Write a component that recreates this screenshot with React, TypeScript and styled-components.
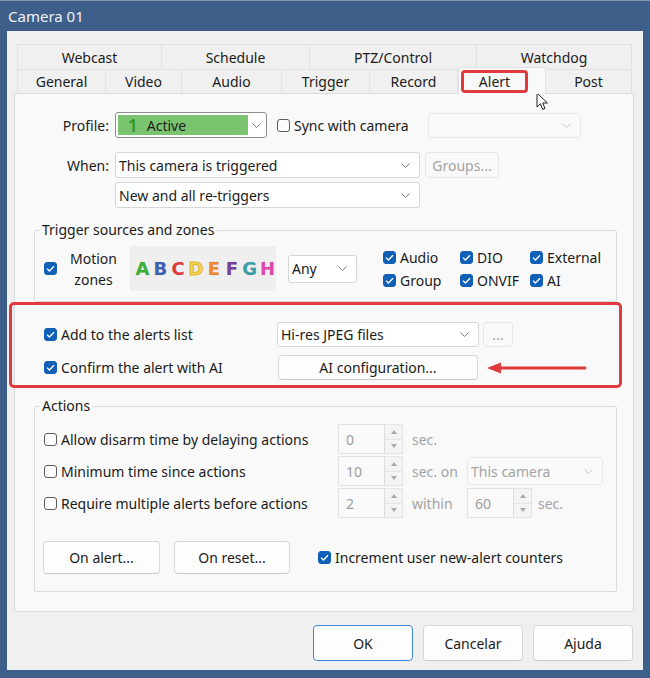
import styled, { createGlobalStyle, css } from "styled-components"

const GlobalStyle = createGlobalStyle`
    html, body {
        margin: 0;
        padding: 0;
        background: #3e5f8a;
    }
    body {
        font-family: "Noto Sans", "Open Sans", sans-serif;
        font-size: 14px;
        color: #1b1b1b;
    }
    * {
        box-sizing: border-box;
    }
`

const topTabs = [
    { label: "Webcast", width: 145 },
    { label: "Schedule", width: 148 },
    { label: "PTZ/Control", width: 167 },
    { label: "Watchdog", width: 155 }
]

const bottomTabs = [
    { label: "General", width: 89 },
    { label: "Video", width: 76 },
    { label: "Audio", width: 100 },
    { label: "Trigger", width: 88 },
    { label: "Record", width: 88 },
    { label: "Alert", width: 88, selected: true },
    { label: "Post", width: 86 }
]

const zones = [
    { letter: "A", color: "#3bb23a" },
    { letter: "B", color: "#3e60b5" },
    { letter: "C", color: "#e23b3b" },
    { letter: "D", color: "#f3d35a" },
    { letter: "E", color: "#ee8a2c" },
    { letter: "F", color: "#7a3e9d" },
    { letter: "G", color: "#3a9fa9" },
    { letter: "H", color: "#e246ac" }
]

const sources = [
    { label: "Audio" },
    { label: "DIO" },
    { label: "External" },
    { label: "Group" },
    { label: "ONVIF" },
    { label: "AI" }
]

const Chevron = ({ light }: { light?: boolean }) => (
    <svg width="9" height="5" viewBox="0 0 9 5">
        <path d="M0.5 0.5 L4.5 4.5 L8.5 0.5" stroke={light ? "#c4c4c4" : "#7a7a7a"} fill="none" />
    </svg>
)

const Check = ({ checked }: { checked?: boolean }) => (
    <Box $checked={checked}>
        {checked && (
            <svg width="9" height="7" viewBox="0 0 9 7">
                <path d="M1 3.6 L3.4 6 L8 1.2" stroke="#fff" strokeWidth="1.3" fill="none" />
            </svg>
        )}
    </Box>
)

const SpinBox = ({ value }: { value: string }) => (
    <Spin>
        <SpinValue>{value}</SpinValue>
        <SpinArrows>
            <SpinArrow>
                <svg width="6" height="4" viewBox="0 0 6 4">
                    <path d="M0 4 L3 0 L6 4 Z" fill="#a8a8a8" />
                </svg>
            </SpinArrow>
            <SpinArrow>
                <svg width="6" height="4" viewBox="0 0 6 4">
                    <path d="M0 0 L3 4 L6 0 Z" fill="#a8a8a8" />
                </svg>
            </SpinArrow>
        </SpinArrows>
    </Spin>
)

export default function App() {
    return (
        <Window>
            <GlobalStyle />
            <TitleBar>Camera 01</TitleBar>
            <Client>
                <TabRow $height={25}>
                    {topTabs.map(tab => (
                        <Tab key={tab.label} $width={tab.width}>
                            {tab.label}
                        </Tab>
                    ))}
                </TabRow>
                <TabRow $height={24}>
                    {bottomTabs.map(tab => (
                        <Tab key={tab.label} $width={tab.width} $selected={tab.selected}>
                            {tab.selected ? <Highlight>{tab.label}</Highlight> : tab.label}
                        </Tab>
                    ))}
                </TabRow>
                <Panel>
                    <FormRow>
                        <Label>Profile:</Label>
                        <ProfileCombo>
                            <ProfileValue>
                                <ProfileNumber>1</ProfileNumber>
                                Active
                            </ProfileValue>
                            <ChevronSlot>
                                <Chevron />
                            </ChevronSlot>
                        </ProfileCombo>
                        <CheckLabel $gap={10}>
                            <Check />
                            Sync with camera
                        </CheckLabel>
                        <Combo $width={153} $height={25} $disabled $offset={19}>
                            <span />
                            <Chevron light />
                        </Combo>
                    </FormRow>
                    <FormRow $top={14}>
                        <Label>When:</Label>
                        <Combo $width={305}>
                            This camera is triggered
                            <Chevron />
                        </Combo>
                        <Button $width={74} $height={26} $disabled $offset={5}>
                            Groups...
                        </Button>
                    </FormRow>
                    <FormRow $top={4} $indent={81}>
                        <Combo $width={305}>
                            New and all re-triggers
                            <Chevron />
                        </Combo>
                    </FormRow>

                    <Group $top={12} $bottom={10}>
                        <Legend>Trigger sources and zones</Legend>
                        <MotionRow>
                            <Check checked />
                            <MotionLabel>
                                Motion
                                <br />
                                zones
                            </MotionLabel>
                            <ZoneStrip>
                                {zones.map(zone => (
                                    <ZoneLetter key={zone.letter} $color={zone.color} $outline={zone.letter === "D"}>
                                        {zone.letter}
                                    </ZoneLetter>
                                ))}
                            </ZoneStrip>
                            <Combo $width={69} $height={28} $offset={12}>
                                Any
                                <Chevron />
                            </Combo>
                            <SourceGrid>
                                {sources.map(source => (
                                    <CheckLabel key={source.label}>
                                        <Check checked />
                                        {source.label}
                                    </CheckLabel>
                                ))}
                            </SourceGrid>
                        </MotionRow>
                    </Group>

                    <AlertBox>
                        <AlertRow>
                            <AlertLabel>
                                <Check checked />
                                Add to the alerts list
                            </AlertLabel>
                            <Combo $width={202} $height={25}>
                                Hi-res JPEG files
                                <Chevron />
                            </Combo>
                            <Button $width={30} $height={25} $disabled $offset={4}>
                                ...
                            </Button>
                        </AlertRow>
                        <AlertRow $top={8}>
                            <AlertLabel>
                                <Check checked />
                                Confirm the alert with AI
                            </AlertLabel>
                            <Button $width={200} $height={25} $offset={1}>
                                AI configuration...
                            </Button>
                            <PointerArrow width="100" height="14" viewBox="0 0 100 14">
                                <path d="M12 7 H98" stroke="#e03a3e" strokeWidth="3" strokeLinecap="round" />
                                <path d="M0 7 L14 1.5 L14 12.5 Z" fill="#e03a3e" />
                            </PointerArrow>
                        </AlertRow>
                    </AlertBox>

                    <Group $top={8} $bottom={17}>
                        <Legend>Actions</Legend>
                        <ActionGrid>
                            <CheckLabel>
                                <Check />
                                Allow disarm time by delaying actions
                            </CheckLabel>
                            <SpinBox value="0" />
                            <Unit>sec.</Unit>
                            <span />

                            <CheckLabel>
                                <Check />
                                Minimum time since actions
                            </CheckLabel>
                            <SpinBox value="10" />
                            <Unit>sec. on</Unit>
                            <Combo $width={136} $height={28} $disabled>
                                This camera
                                <Chevron light />
                            </Combo>

                            <CheckLabel>
                                <Check />
                                Require multiple alerts before actions
                            </CheckLabel>
                            <SpinBox value="2" />
                            <Unit>within</Unit>
                            <SpinGroup>
                                <SpinBox value="60" />
                                <Unit>sec.</Unit>
                            </SpinGroup>
                        </ActionGrid>
                        <ActionButtons>
                            <Button $width={117} $height={33}>
                                On alert...
                            </Button>
                            <Button $width={116} $height={33} $offset={14}>
                                On reset...
                            </Button>
                            <CheckLabel $gap={28}>
                                <Check checked />
                                Increment user new-alert counters
                            </CheckLabel>
                        </ActionButtons>
                    </Group>
                </Panel>
                <Footer>
                    <Button $width={100} $height={36} $focused>
                        OK
                    </Button>
                    <Button $width={100} $height={36}>
                        Cancelar
                    </Button>
                    <Button $width={100} $height={36}>
                        Ajuda
                    </Button>
                </Footer>
            </Client>
            <Cursor width="13" height="19" viewBox="0 0 13 19">
                <path
                    d="M1 1 L1 15 L4.4 11.8 L6.8 17.4 L9 16.4 L6.7 11 L11.4 11 Z"
                    fill="#fff"
                    stroke="#222"
                    strokeWidth="1"
                    strokeLinejoin="round"
                />
            </Cursor>
        </Window>
    )
}

const Window = styled.div`
    position: relative;
    width: 650px;
    height: 678px;
    display: flex;
    flex-direction: column;
    padding: 0 7px 8px 7px;
    background: #3e5f8a;
    border-top: 1px solid #8797ad;
`

const TitleBar = styled.div`
    height: 30px;
    display: flex;
    align-items: center;
    padding-left: 1px;
    color: #eef2f7;
    font-size: 15px;
`

const Client = styled.div`
    flex: 1;
    display: flex;
    flex-direction: column;
    padding: 13px 9px 9px 7px;
    background: #f0f0f0;
`

const TabRow = styled.div<{ $height: number }>`
    display: flex;
    height: ${p => p.$height}px;
    padding-left: 3px;
`

const Tab = styled.div<{ $width: number; $selected?: boolean }>`
    width: ${p => p.$width}px;
    display: flex;
    align-items: center;
    justify-content: center;
    border-top: 1px solid #e2e2e2;
    border-right: 1px solid #e2e2e2;
    background: #f0f0f0;

    &:first-child {
        border-left: 1px solid #e2e2e2;
    }

    ${p =>
        p.$selected &&
        css`
            position: relative;
            z-index: 1;
            margin-top: -2px;
            margin-bottom: -1px;
            justify-content: flex-start;
            padding-left: 2px;
            background: #f9f9f9;
            border-left: 1px solid #e2e2e2;
        `}
`

const Highlight = styled.span`
    width: 67px;
    height: 23px;
    display: flex;
    align-items: center;
    justify-content: center;
    border: 3px solid #e03a3e;
    border-radius: 4px;
`

const Panel = styled.div`
    height: 519px;
    display: flex;
    flex-direction: column;
    padding: 17px 16px 0 19px;
    background: #f9f9f9;
    border: 1px solid #dcdcdc;
`

const FormRow = styled.div<{ $top?: number; $indent?: number }>`
    display: flex;
    align-items: center;
    margin-top: ${p => p.$top ?? 1}px;
    padding-left: ${p => p.$indent ?? 0}px;
`

const Label = styled.span`
    width: 75px;
    margin-right: 6px;
    text-align: right;
`

const ProfileCombo = styled.div`
    width: 152px;
    height: 26px;
    display: flex;
    align-items: center;
    padding: 2px;
    background: #fff;
    border: 1px solid #8d8d8d;
    border-radius: 3px;
`

const ProfileValue = styled.div`
    width: 130px;
    height: 20px;
    display: flex;
    align-items: center;
    padding-left: 10px;
    gap: 9px;
    background: #7bc46f;
`

const ProfileNumber = styled.span`
    color: #2c962d;
    font-size: 17px;
    font-weight: 600;
`

const ChevronSlot = styled.span`
    flex: 1;
    display: flex;
    justify-content: center;
`

const Combo = styled.div<{ $width: number; $height?: number; $disabled?: boolean; $offset?: number }>`
    width: ${p => p.$width}px;
    height: ${p => p.$height ?? 26}px;
    flex: none;
    display: flex;
    align-items: center;
    justify-content: space-between;
    margin-left: ${p => p.$offset ?? 0}px;
    padding: 0 9px 0 3px;
    background: #fff;
    border: 1px solid #d6d6d6;
    border-radius: 3px;

    ${p =>
        p.$disabled &&
        css`
            color: #a3a3a3;
            background: #fafafa;
            border-color: #e8e8e8;
        `}
`

const Button = styled.div<{ $width: number; $height: number; $disabled?: boolean; $focused?: boolean; $offset?: number }>`
    width: ${p => p.$width}px;
    height: ${p => p.$height}px;
    flex: none;
    display: flex;
    align-items: center;
    justify-content: center;
    margin-left: ${p => p.$offset ?? 0}px;
    background: #fdfdfd;
    border: 1px solid #d8d8d8;
    border-bottom-color: #c8c8c8;
    border-radius: 4px;

    ${p =>
        p.$disabled &&
        css`
            color: #a3a3a3;
            background: #f9f9f9;
            border-color: #e6e6e6;
        `}

    ${p =>
        p.$focused &&
        css`
            border: 1px solid #3f86d6;
        `}
`

const Box = styled.span<{ $checked?: boolean }>`
    width: 13px;
    height: 13px;
    flex: none;
    display: inline-flex;
    align-items: center;
    justify-content: center;
    border-radius: 3px;

    ${p =>
        p.$checked
            ? css`
                  background: #1160b8;
                  border: 1px solid #1160b8;
              `
            : css`
                  background: #fdfdfd;
                  border: 1px solid #5c5c5c;
              `}
`

const CheckLabel = styled.label<{ $gap?: number }>`
    display: flex;
    align-items: center;
    gap: 4px;
    margin-left: ${p => p.$gap ?? 0}px;
    white-space: nowrap;
`

const Group = styled.fieldset<{ $top: number; $bottom: number }>`
    margin: ${p => p.$top}px 0 0 0;
    padding: 0 0 ${p => p.$bottom}px 9px;
    border: 1px solid #dcdcdc;
    border-radius: 2px;
    min-width: 0;
`

const Legend = styled.legend`
    height: 20px;
    margin-left: -4px;
    padding: 0 2px;
    line-height: 20px;
`

const MotionRow = styled.div`
    height: 45px;
    display: flex;
    align-items: center;
    margin-top: 6px;
`

const MotionLabel = styled.span`
    width: 57px;
    margin-left: 8px;
    text-align: center;
    line-height: 21px;
`

const ZoneStrip = styled.div`
    width: 146px;
    height: 45px;
    display: flex;
    align-items: center;
    gap: 1px;
    margin-left: 8px;
    padding-left: 4px;
    background: #efefef;
`

const ZoneLetter = styled.span<{ $color: string; $outline?: boolean }>`
    width: 17px;
    text-align: center;
    color: ${p => p.$color};
    font-family: "DejaVu Sans", sans-serif;
    font-size: 18px;
    font-weight: 700;
    -webkit-text-stroke: ${p => (p.$outline ? "1px #e2b825" : "0.4px rgba(0,0,0,0.15)")};
`

const SourceGrid = styled.div`
    display: grid;
    grid-template-columns: 77px 70px auto;
    grid-auto-rows: 22px;
    row-gap: 1px;
    margin-left: 26px;
`

const AlertBox = styled.div`
    display: flex;
    flex-direction: column;
    margin: 0 -5px 0 -25px;
    padding: 17px 0 5px 32px;
    border: 3px solid #e03a3e;
    border-radius: 5px;
`

const AlertRow = styled.div<{ $top?: number }>`
    height: 25px;
    display: flex;
    align-items: center;
    margin-top: ${p => p.$top ?? 0}px;
`

const AlertLabel = styled(CheckLabel)`
    width: 233px;
`

const PointerArrow = styled.svg`
    margin-left: 9px;
    flex: none;
`

const ActionGrid = styled.div`
    display: grid;
    grid-template-columns: 294px 65px 64px auto;
    grid-auto-rows: 30px;
    row-gap: 2px;
    align-items: center;
    margin-top: 8px;
`

const Spin = styled.div`
    width: 65px;
    height: 30px;
    display: flex;
    background: #fafafa;
    border: 1px solid #e4e4e4;
`

const SpinValue = styled.span`
    flex: 1;
    display: flex;
    align-items: center;
    padding-left: 7px;
    color: #9d9d9d;
`

const SpinArrows = styled.div`
    width: 18px;
    display: flex;
    flex-direction: column;
    border-left: 1px solid #dcdcdc;
`

const SpinArrow = styled.span`
    flex: 1;
    display: flex;
    align-items: center;
    justify-content: center;
    background: #f4f4f4;

    & + & {
        border-top: 1px solid #e4e4e4;
    }
`

const Unit = styled.span`
    padding-left: 9px;
    color: #a3a3a3;
    white-space: nowrap;
`

const SpinGroup = styled.div`
    display: flex;
    align-items: center;

    ${Unit} {
        padding-left: 6px;
    }
`

const ActionButtons = styled.div`
    display: flex;
    align-items: center;
    margin: 23px 0 0 -1px;
`

const Footer = styled.div`
    display: flex;
    justify-content: flex-end;
    gap: 10px;
    margin-top: 13px;
    padding-right: 1px;
`

const Cursor = styled.svg`
    position: absolute;
    left: 536px;
    top: 91px;
`
